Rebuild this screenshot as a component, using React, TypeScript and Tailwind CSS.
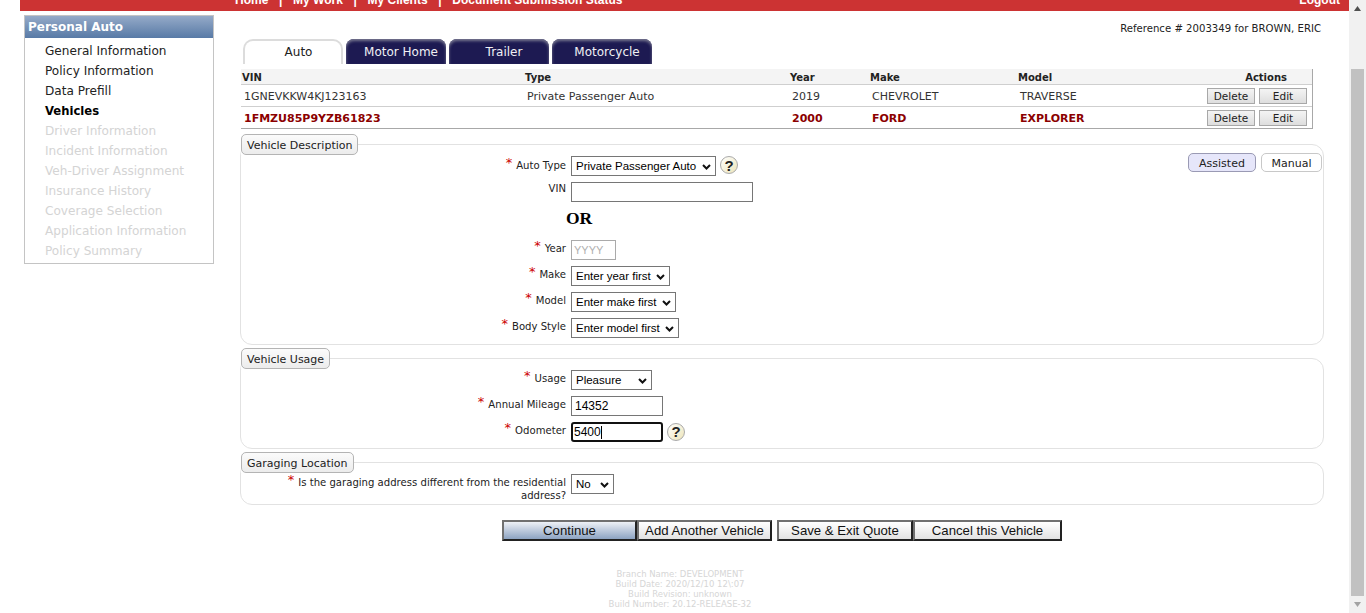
import React from "react";

const dv = "font-['DejaVu_Sans','Liberation_Sans',sans-serif]";
const ar = "font-['Liberation_Sans',Arial,sans-serif]";

const navDone = ["General Information", "Policy Information", "Data Prefill"];
const navOff = ["Driver Information", "Incident Information", "Veh-Driver Assignment", "Insurance History", "Coverage Selection", "Application Information", "Policy Summary"];

function Tab({ label, active }: { label: string; active?: boolean }) {
  return active ? (
    <div className="flex h-[25px] w-[100px] items-center justify-center rounded-t-[10px] border-2 border-b-0 border-[#dcdcdc] bg-white pb-[2px] pl-[11px] text-[12px] text-[#222]">{label}</div>
  ) : (
    <div className="flex h-[25px] w-[100px] items-center justify-center rounded-t-[8px] bg-[#1d1a52] pl-[10px] pt-[1px] text-[12px] font-medium text-[#f0f0f4] shadow-[inset_0_2px_3px_#77778f]">{label}</div>
  );
}

function SmallBtn({ label }: { label: string }) {
  return <span className="flex h-[16px] items-center justify-center border border-[#a8a8a8] bg-gradient-to-b from-[#f4f4f4] to-[#dedede] pt-[1px] text-[10.5px] text-[#222]">{label}</span>;
}

function VehicleRow({ vals, alert, last }: { vals: string[]; alert?: boolean; last?: boolean }) {
  return (
    <div className={`grid h-[22px] grid-cols-[283px_265px_80px_148px_1fr_auto] items-center pl-[3px] pt-[3px] text-[11px] ${last ? "border-b border-[#a8a8a8]" : "border-b border-[#cfcfcf]"} ${alert ? "font-bold text-[#8b0000]" : "text-[#333]"}`}>
      {vals.map((v, i) => (
        <span key={i}>{v || "\u00a0"}</span>
      ))}
      <span className="mb-[2px] flex gap-[4px] pr-[5px] font-normal">
        <span className="w-[48px]"><SmallBtn label="Delete" /></span>
        <span className="w-[48px]"><SmallBtn label="Edit" /></span>
      </span>
    </div>
  );
}

function Group({ title, className, children }: { title: string; className: string; children: React.ReactNode }) {
  return (
    <fieldset className={`w-[1084px] rounded-[12px] border border-[#e2e2e2] ${className}`}>
      <legend className="ml-0 flex h-[21px] items-center rounded-[5px] border border-[#b4b4b4] bg-gradient-to-b from-[#fbfbfb] to-[#ececec] px-[5px] pt-[4px] text-[11px] text-[#222]">{title}</legend>
      {children}
    </fieldset>
  );
}

function Row({ label, req = true, children, right, className = "", labelPt = "pt-[2px]" }: { label: React.ReactNode; req?: boolean; children: React.ReactNode; right?: React.ReactNode; className?: string; labelPt?: string }) {
  return (
    <div className={`flex h-[20px] items-start ${className}`}>
      <div className={`flex w-[325px] justify-end text-right text-[10.1px] leading-[13px] text-[#222] ${labelPt}`}>
        <span>
          {req && <span className="relative -top-[2px] mr-[4px] text-[13px] leading-[10px] text-[#c00]">*</span>}
          {label}
        </span>
      </div>
      <div className="ml-[5px] flex items-center gap-[4px]">{children}</div>
      {right}
    </div>
  );
}

function Sel({ w, value }: { w: string; value: string }) {
  return (
    <span className={`${w} relative block h-[20px]`}>
      <select defaultValue={value} className={`${ar} block h-[20px] w-full appearance-none border border-[#767676] bg-white pl-[4px] pt-[1px] text-[11.5px] text-black`}>
        <option>{value}</option>
      </select>
      <svg width="9" height="6" viewBox="0 0 9 6" className="pointer-events-none absolute right-[5px] top-[8px]">
        <path d="M1 1 L4.5 4.5 L8 1" fill="none" stroke="#111" strokeWidth="2" />
      </svg>
    </span>
  );
}

function Help({ className = "" }: { className?: string }) {
  return (
    <span className={`${ar} ${className} flex h-[18px] w-[18px] items-center justify-center rounded-full border border-[#aaa] bg-gradient-to-br from-[#ffffff] to-[#ece4b8] text-[15px] font-bold leading-none text-[#222]`}>?</span>
  );
}

function Action({ label, primary, w }: { label: string; primary?: boolean; w: string }) {
  return (
    <span className={`${w} ${ar} flex h-[21px] items-center justify-center border-2 border-t-[#707070] border-l-[#707070] border-r-[#222] border-b-[#222] text-[13.2px] leading-none text-[#111] ${primary ? "bg-gradient-to-b from-[#eef1f6] to-[#8da3c2]" : "bg-gradient-to-b from-white to-[#e2e2e2]"}`}>{label}</span>
  );
}

export default function App() {
  return (
    <div className={`${dv} flex h-[613px] w-[1366px] overflow-hidden bg-white`}>
      <div className="h-[613px] w-[1349px]">
        <header className={`${ar} ml-[20px] flex h-[11px] w-[1329px] items-end overflow-hidden bg-[#cc3333] pb-[4px] text-[12px] font-bold leading-[14px] text-white`}>
          <nav className="ml-[215px] flex gap-[10.7px] whitespace-nowrap">
            <span>Home</span><span>|</span><span>My Work</span><span>|</span><span>My Clients</span><span>|</span><span>Document Submission Status</span>
          </nav>
          <span className="ml-auto mr-[9px]">Logout</span>
        </header>

        <div className="flex">
          <aside className="ml-[24px] mt-[4px] h-[249px] w-[190px] border border-[#c4c4c4]">
            <div className="flex h-[22px] items-center bg-gradient-to-b from-[#95aac8] to-[#587aa6] pl-[3px] text-[12px] font-bold text-white">Personal Auto</div>
            <ul className="pl-[20px] pt-[3px] text-[12.1px] leading-[20px]">
              {navDone.map((n) => <li key={n} className="text-[#222]">{n}</li>)}
              <li className="text-[11.6px] font-bold text-black">Vehicles</li>
              {navOff.map((n) => <li key={n} className="text-[#d4d4d4]">{n}</li>)}
            </ul>
          </aside>

          <main className="ml-[26px] w-[1084px]">
            <div className="mt-[11px] h-[13px] pr-[3px] text-right text-[10.15px] leading-[13px] text-[#222]">Reference # 2003349 for BROWN, ERIC</div>
            <div className="ml-[3px] mt-[4px] flex gap-[3px]">
              <Tab label="Auto" active />
              <Tab label="Motor Home" />
              <Tab label="Trailer" />
              <Tab label="Motorcycle" />
            </div>
            <section className="ml-[1px] mt-[5px] w-[1072px] border-r border-[#a8a8a8]">
              <div className="grid h-[16px] grid-cols-[283px_265px_80px_148px_1fr_auto] items-center border-b border-[#cfcfcf] bg-[#f4f4f4] pl-[1px] pt-[1px] text-[10px] font-bold text-[#222]">
                <span>VIN</span><span>Type</span><span>Year</span><span>Make</span><span>Model</span><span className="pr-[25px]">Actions</span>
              </div>
              <VehicleRow vals={["1GNEVKKW4KJ123163", "Private Passenger Auto", "2019", "CHEVROLET", "TRAVERSE"]} />
              <VehicleRow alert last vals={["1FMZU85P9YZB61823", "", "2000", "FORD", "EXPLORER"]} />
            </section>

            <Group title="Vehicle Description" className="mt-[5px] h-[211px]">
              <Row label="Auto Type" labelPt="pt-[3px]" className="mt-[1px]" right={
                <div className="ml-auto mr-[1px] mt-[-3px] flex gap-[5px] text-[11px] text-[#222]">
                  <span className="flex h-[19px] w-[68px] items-center justify-center rounded-[5px] border border-[#9a9ab4] bg-[#e6e6fa] pt-[3px]">Assisted</span>
                  <span className="flex h-[19px] w-[61px] items-center justify-center rounded-[5px] border border-[#c8c8c8] bg-white pt-[3px]">Manual</span>
                </div>
              }>
                <Sel w="w-[145px]" value="Private Passenger Auto" /><Help className="mb-[2px]" />
              </Row>
              <Row label="VIN" req={false} labelPt="pt-0" className="mt-[6px]">
                <input readOnly className={`${ar} h-[20px] w-[182px] border border-[#767676] bg-white`} />
              </Row>
              <div className="ml-[325px] h-[38px] pt-[6px] font-['Liberation_Serif',serif] text-[17.5px] font-bold leading-[20px] text-black">OR</div>
              <Row label="Year">
                <input readOnly placeholder="YYYY" className={`${ar} h-[20px] w-[45px] border border-[#aaa] bg-white px-[2px] text-[11px] placeholder:text-[#b0b0b0]`} />
              </Row>
              <Row label="Make" className="mt-[6px]"><Sel w="w-[99px]" value="Enter year first" /></Row>
              <Row label="Model" className="mt-[6px]"><Sel w="w-[105px]" value="Enter make first" /></Row>
              <Row label="Body Style" className="mt-[6px]"><Sel w="w-[108px]" value="Enter model first" /></Row>
            </Group>

            <Group title="Vehicle Usage" className="mt-[3px] h-[101px]">
              <Row label="Usage" className="mt-[1px]"><Sel w="w-[81px]" value="Pleasure" /></Row>
              <Row label="Annual Mileage" className="mt-[6px]">
                <input readOnly value="14352" className={`${ar} h-[20px] w-[92px] border border-[#767676] bg-white px-[3px] text-[12px] text-black`} />
              </Row>
              <Row label="Odometer" className="mt-[6px]">
                <span className="relative">
                  <input readOnly value="5400" className={`${ar} block h-[20px] w-[92px] rounded-[3px] border-2 border-[#111] bg-white px-[1px] text-[12px] text-black`} />
                  <span className="absolute left-[30px] top-[4px] h-[13px] w-[1px] bg-black" />
                </span>
                <Help className="mb-[1px]" />
              </Row>
            </Group>

            <Group title="Garaging Location" className="mt-[3px] h-[53px]">
              <Row label={<>Is the garaging address different from the residential<br />address?</>} className="mt-[1px]"><Sel w="w-[43px]" value="No" /></Row>
            </Group>

            <div className="ml-[262px] mt-[15px] flex">
              <Action primary w="w-[135px]" label="Continue" />
              <Action w="w-[135px]" label="Add Another Vehicle" />
              <Action w="ml-[5px] w-[136px]" label="Save & Exit Quote" />
              <Action w="w-[149px]" label="Cancel this Vehicle" />
            </div>

            <footer className="ml-[268px] mt-[28px] w-[344px] text-center text-[8.5px] leading-[10px] text-[#d6d6d6]">
              <div>Branch Name: DEVELOPMENT</div>
              <div>Build Date: 2020/12/10 12\:07</div>
              <div>Build Revision: unknown</div>
              <div>Build Number: 20.12-RELEASE-32</div>
            </footer>
          </main>
        </div>
      </div>

      <div className="flex h-[613px] w-[17px] flex-col items-center bg-[#f1f1f1]">
        <svg width="17" height="17" viewBox="0 0 17 17" className="shrink-0"><path d="M5 11 L8.5 6 L12 11 Z" fill="#505050" /></svg>
        <div className="mt-[52px] h-[527px] w-[13px] bg-[#c1c1c1]" />
        <svg width="17" height="17" viewBox="0 0 17 17" className="shrink-0"><path d="M5 6 L12 6 L8.5 11 Z" fill="#a3a3a3" /></svg>
      </div>
    </div>
  );
}
